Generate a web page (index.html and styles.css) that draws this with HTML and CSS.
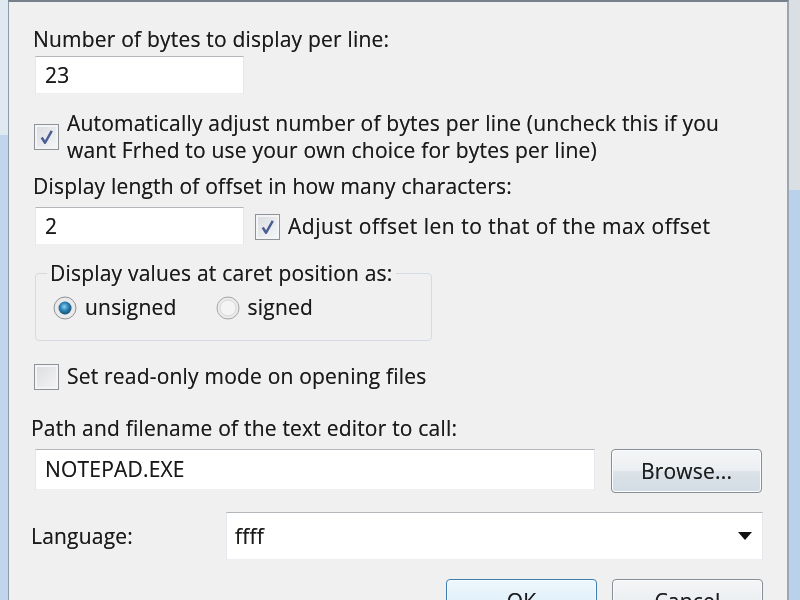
FILE: index.html
```html
<!DOCTYPE html>
<html lang="en">
<head>
    <meta charset="UTF-8">
    <title>Options</title>
    <link rel="stylesheet" href="styles.css">
</head>
<body>
    <div class="window">
        <div class="edgeLeft"></div>
        <div class="dialog">
            <div class="label firstLabel">Number of bytes to display per line:</div>
            <div class="field shortField firstField">23</div>

            <div class="checkRow autoRow">
                <span class="box">
                    <svg width="24" height="24" viewBox="0 0 24 24"><path d="M7 12.5 L10.5 18 L17.5 5.5" fill="none" stroke="#4b5e93" stroke-width="2.6" stroke-linejoin="round"/></svg>
                </span>
                <span class="checkText">Automatically adjust number of bytes per line (uncheck this if you<br>want Frhed to use your own choice for bytes per line)</span>
            </div>

            <div class="label offsetLabel">Display length of offset in how many characters:</div>
            <div class="offsetRow">
                <div class="field shortField">2</div>
                <div class="checkRow">
                    <span class="box">
                        <svg width="24" height="24" viewBox="0 0 24 24"><path d="M7 12.5 L10.5 18 L17.5 5.5" fill="none" stroke="#4b5e93" stroke-width="2.6" stroke-linejoin="round"/></svg>
                    </span>
                    <span class="checkText wideText">Adjust offset len to that of the max offset</span>
                </div>
            </div>

            <fieldset class="group">
                <legend>Display values at caret position as:</legend>
                <div class="radioRow">
                    <span class="radio">
                        <svg width="24" height="24" viewBox="0 0 24 24">
                            <defs>
                                <radialGradient id="dot" cx="45%" cy="40%" r="60%">
                                    <stop offset="0" stop-color="#8fd3f5"/>
                                    <stop offset="0.5" stop-color="#2d85b8"/>
                                    <stop offset="1" stop-color="#164f74"/>
                                </radialGradient>
                            </defs>
                            <circle cx="12" cy="12" r="11" fill="#e9eaeb" stroke="#8e9196"/>
                            <circle cx="12" cy="12" r="6.5" fill="url(#dot)"/>
                        </svg>
                    </span>
                    <span class="radioText">unsigned</span>
                    <span class="radio secondRadio">
                        <svg width="24" height="24" viewBox="0 0 24 24">
                            <circle cx="12" cy="12" r="11" fill="#ececec" stroke="#a3a5a8"/>
                            <circle cx="12" cy="12" r="8" fill="#f4f4f4" stroke="#d8d8d8"/>
                        </svg>
                    </span>
                    <span class="radioText">signed</span>
                </div>
            </fieldset>

            <div class="checkRow readOnlyRow">
                <span class="box emptyBox"></span>
                <span class="checkText">Set read-only mode on opening files</span>
            </div>

            <div class="label pathLabel">Path and filename of the text editor to call:</div>
            <div class="pathRow">
                <div class="field pathField">NOTEPAD.EXE</div>
                <div class="button">Browse...</div>
            </div>

            <div class="langRow">
                <div class="langLabel">Language:</div>
                <div class="combo">
                    <span>ffff</span>
                    <svg width="14" height="8" viewBox="0 0 14 8"><path d="M0 0 H14 L7 8 Z" fill="#111"/></svg>
                </div>
            </div>

            <div class="buttonRow">
                <div class="button defaultButton">OK</div>
                <div class="button">Cancel</div>
            </div>
        </div>
        <div class="edgeRight"></div>
    </div>
</body>
</html>
```

FILE: styles.css
```css
body
{
    margin: 0;
    background-color: #c3d8ee;
    font-family: "Open Sans", "Noto Sans", sans-serif;
    font-size: 21px;
    line-height: 27px;
    letter-spacing: 0.2px;
    color: #1a1a1a;
}
.window
{
    display: flex;
    height: 600px;
    overflow: hidden;
    filter: blur(0.5px);
}
.edgeLeft
{
    width: 8px;
    background: linear-gradient(#e0e9f2 0, #e0e9f2 135px, #c1d6ec 135px);
}
.edgeRight
{
    width: 11px;
    background: linear-gradient(#dadfe4 0, #dadfe4 190px, #b9d1ea 190px);
}
.dialog
{
    flex: 1;
    display: flex;
    flex-direction: column;
    background-color: #f0f0f0;
    border-top: 2px solid #77818b;
    border-left: 1px solid #8c99a6;
    border-right: 2px solid #9ba6b1;
    padding: 24px 24px 0 24px;
    text-shadow: 0 0 0.5px rgba(0, 0, 0, 0.6);
}
/* the dialog is taller than the window, rows must keep their size */
.dialog > *
{
    flex-shrink: 0;
}
.label
{
    white-space: nowrap;
}
.field
{
    box-sizing: border-box;
    height: 38px;
    margin-left: 2px;
    padding-left: 9px;
    display: flex;
    align-items: center;
    background-color: #fff;
    border: 1px solid;
    border-color: #b3b6bb #e4e7ec #eceef1 #e4e7ec;
}
.shortField
{
    width: 209px;
    margin-top: 5px;
}
.firstField
{
    margin-top: 3px;
}
.checkRow
{
    display: flex;
    align-items: center;
    white-space: nowrap;
}
.box
{
    box-sizing: border-box;
    width: 25px;
    height: 26px;
    flex: none;
    margin-left: 1px;
    border: 1px solid #8f9296;
    background: linear-gradient(135deg, #d9dbe0, #f6f7f9);
    box-shadow: inset 0 0 0 2px #f3f4f6;
    display: flex;
    align-items: center;
    justify-content: center;
}
.box svg
{
    display: block;
}
.checkText
{
    margin-left: 8px;
}
.wideText
{
    letter-spacing: 0.5px;
}
.autoRow
{
    margin-top: 16px;
}
.offsetLabel
{
    margin-top: 9px;
}
.offsetRow
{
    display: flex;
    align-items: center;
    margin-top: 2px;
}
.offsetRow .checkRow
{
    margin-left: 10px;
    margin-top: 6px;
}
.group
{
    width: 397px;
    margin: 15px 0 0 2px;
    padding: 0 0 19px 11px;
    border: 1px solid #d5dbe0;
    border-radius: 4px;
    box-sizing: border-box;
}
.group legend
{
    padding: 0 3px;
}
.radioRow
{
    display: flex;
    align-items: center;
    margin: 7px 0 0 6px;
}
.radio svg
{
    display: block;
}
.radioText
{
    margin-left: 8px;
}
.secondRadio
{
    margin-left: 39px;
}
.readOnlyRow
{
    margin-top: 22px;
}
.emptyBox
{
    background: linear-gradient(135deg, #dcdde0, #f4f4f5);
}
.pathLabel
{
    margin-top: 25px;
    margin-left: -2px;
}
.pathRow
{
    display: flex;
    margin-top: 7px;
    gap: 16px;
}
.pathField
{
    width: 560px;
    height: 41px;
}
.button
{
    box-sizing: border-box;
    width: 151px;
    height: 44px;
    display: flex;
    align-items: center;
    justify-content: center;
    border: 1px solid #868f97;
    border-radius: 4px;
    background: linear-gradient(#f4f5f6 0, #eceff2 48%, #dbe2e8 52%, #d3dce4 100%);
    box-shadow: inset 0 0 0 1px #fbfcfd;
    color: #1d1d1d;
}
.langRow
{
    display: flex;
    align-items: center;
    margin-top: 19px;
}
.langLabel
{
    width: 195px;
    margin-left: -2px;
}
.combo
{
    box-sizing: border-box;
    flex: 1;
    height: 48px;
    display: flex;
    align-items: center;
    justify-content: space-between;
    padding: 0 10px 0 8px;
    background-color: #fff;
    border: 1px solid;
    border-color: #b3b6bb #e4e7ec #eceef1 #e4e7ec;
}
.buttonRow
{
    display: flex;
    justify-content: flex-end;
    gap: 15px;
    margin-top: 19px;
}
.defaultButton
{
    border-color: #3d7eb0;
    background: linear-gradient(#eef7fd 0, #e2f1fb 48%, #c9e6f8 52%, #bde0f6 100%);
}
```
